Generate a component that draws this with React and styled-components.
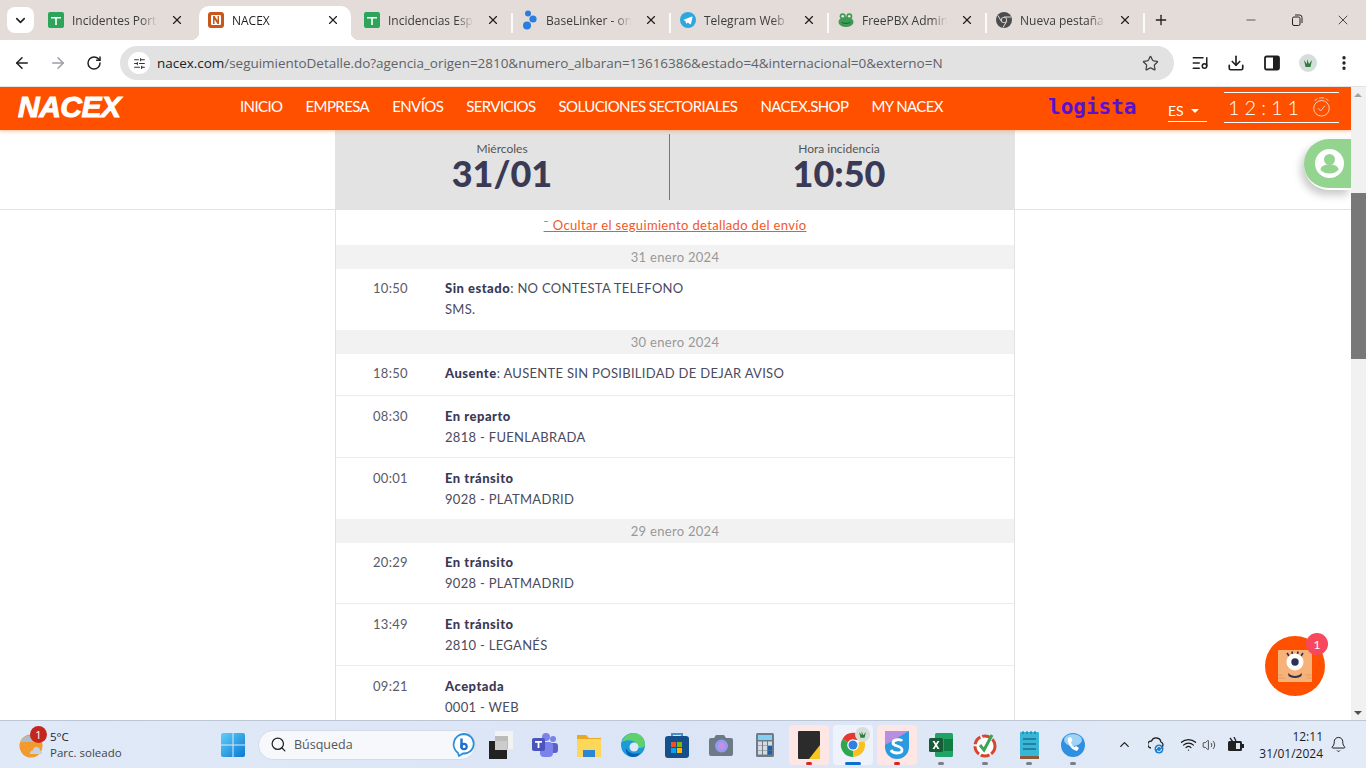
import styled, { createGlobalStyle } from 'styled-components';
import {
  ArrowLeft, ArrowRight, Bell, ChevronDown, ChevronUp, Download, EllipsisVertical, ListMusic,
  Minus, Plus, RotateCw, Search, SlidersHorizontal, Star, Volume2, Wifi, X,
} from 'lucide-react';

const GlobalStyle = createGlobalStyle`
  html, body { margin: 0; height: 100%; overflow: hidden; background: #fff; }
  * { box-sizing: border-box; }
`;

/* ---------- favicons and logos ---------- */

const SheetsIcon = () => (
  <svg width="16" height="16" viewBox="0 0 16 16">
    <rect width="16" height="16" rx="2" fill="#2ca55b" />
    <path d="M3 5h10v1.6H8.8V13H7.2V6.6H3z" fill="#fff" />
  </svg>
);
const NacexIcon = () => (
  <svg width="16" height="16" viewBox="0 0 16 16">
    <rect width="16" height="16" rx="3" fill="#c9561a" />
    <rect x="3" y="3" width="10" height="10" rx="1" fill="#fff" />
    <path d="M5 12V4h1.6L9.6 8.6V4H11v8H9.5L6.5 7.4V12z" fill="#c9561a" />
  </svg>
);
const BaseLinkerIcon = () => (
  <svg width="16" height="20" viewBox="0 0 16 20">
    <circle cx="6" cy="3.5" r="3" fill="#2b7de0" />
    <circle cx="11" cy="9" r="3.6" fill="#2b7de0" />
    <circle cx="5" cy="15.5" r="4" fill="#2b7de0" />
  </svg>
);
const TelegramIcon = () => (
  <svg width="16" height="16" viewBox="0 0 16 16">
    <circle cx="8" cy="8" r="8" fill="#2ea6e0" />
    <path d="M3.2 7.9l8.6-3.4c.5-.2.8.1.7.7L11 11.8c-.1.5-.5.6-.9.4L7.8 10.5 6.7 11.6c-.2.2-.4.2-.5-.1L5.4 9z" fill="#fff" />
  </svg>
);
const FrogIcon = () => (
  <svg width="17" height="16" viewBox="0 0 17 16">
    <ellipse cx="8.5" cy="10" rx="8" ry="5.5" fill="#3f9a55" />
    <circle cx="5" cy="4" r="3.2" fill="#3f9a55" />
    <circle cx="12" cy="4" r="3.2" fill="#3f9a55" />
    <circle cx="5" cy="4" r="1.4" fill="#d9f0d6" />
    <circle cx="12" cy="4" r="1.4" fill="#d9f0d6" />
    <path d="M4 10.5c2.5 1.5 6.500 1.5 9 0" stroke="#1e5a33" fill="none" />
  </svg>
);
const ChromeDark = () => (
  <svg width="16" height="16" viewBox="0 0 16 16">
    <circle cx="8" cy="8" r="8" fill="#4c4c4f" />
    <path d="M8 5h7M5.4 9.5L2 3.5M10.6 9.5L7 15.5" stroke="#e3dcd9" strokeWidth="1" />
    <circle cx="8" cy="8" r="3" fill="#e3dcd9" />
    <circle cx="8" cy="8" r="2.2" fill="#4c4c4f" />
  </svg>
);
const ChromeColor = () => (
  <svg width="26" height="26" viewBox="0 0 26 26">
    <path d="M13 13L2.5 7A12 12 0 0 1 24 8H13z" fill="#e5392f" />
    <path d="M13 13L24 8a12 12 0 0 1-11 17z" fill="#f7c120" />
    <path d="M13 13v12A12 12 0 0 1 2.5 7z" fill="#2fa64f" />
    <circle cx="13" cy="13" r="5.8" fill="#fff" />
    <circle cx="13" cy="13" r="4.5" fill="#2f7fe6" />
  </svg>
);
const PlantAvatar = ({ size = 18 }) => (
  <svg width={size} height={size} viewBox="0 0 18 18">
    <circle cx="9" cy="9" r="9" fill="#d5dedb" />
    <path d="M5 6l3 4 0-5 2 5 3-4-1.5 7h-5z" fill="#2f7d3a" />
  </svg>
);
const ProfileGlyph = () => (
  <svg width="29" height="29" viewBox="0 0 29 29">
    <circle cx="14.5" cy="14.5" r="14.5" fill="#fff" />
    <circle cx="14.5" cy="10.5" r="5.5" fill="#93d58f" />
    <path d="M5.5 21c0-4 4-5.500 9-5.500s9 1.500 9 5.500c-2.500 2.500-5.500 3.500-9 3.500s-6.500-1-9-3.500z" fill="#93d58f" />
  </svg>
);
const ChatBox = () => (
  <svg width="34" height="32" viewBox="0 0 34 32">
    <rect width="34" height="32" rx="1" fill="#f7b27a" />
    <path d="M0 25h5M0 28h7M27 25h7M29 28h5" stroke="#e89a5f" />
    <path d="M9 3l2 3M14 1.5l.5 3M20 1.5l-.5 3M25 3l-2 3" stroke="#2c3350" strokeWidth="1.6" />
    <circle cx="17" cy="12" r="8.5" fill="#fff" />
    <circle cx="17" cy="12" r="3.7" fill="#2c3350" />
    <path d="M10 23c4 4 10 4 14 0l-.5 3c-3 2.500-10 2.500-13 0z" fill="#2c3350" />
  </svg>
);
const ClockGlyph = () => (
  <svg width="19" height="22" viewBox="0 0 22 24" fill="none" stroke="#fbd7c4" strokeWidth="1.1">
    <circle cx="11" cy="13.5" r="9" />
    <path d="M7 13.5l3 3 5-6M3 5l3-3M19 5l-3-3M8 1.5h6" />
  </svg>
);

/* ---------- taskbar icons ---------- */

const WeatherIcon = () => (
  <svg width="26" height="28" viewBox="0 0 26 28">
    <circle cx="12" cy="15" r="11.5" fill="#f29a2e" />
    <path d="M2 11a3.500 3.500 0 0 1 3-4 4.500 4.500 0 0 1 8 1 3 3 0 0 1 1 3z" fill="#a9bdd3" />
    <path d="M11 23a3 3 0 0 1 3-3.500 3.500 3.500 0 0 1 7 0 2.500 2.500 0 0 1 2 3.500z" fill="#c4d4e6" />
  </svg>
);
const WinLogo = () => (
  <svg width="24" height="24" viewBox="0 0 24 24">
    <defs>
      <linearGradient id="win" x1="0" y1="0" x2="1" y2="1">
        <stop offset="0" stopColor="#5fd0f7" />
        <stop offset="1" stopColor="#0a78d4" />
      </linearGradient>
    </defs>
    <path d="M0 2a2 2 0 0 1 2-2h9.500v11.500H0zM12.500 0H22a2 2 0 0 1 2 2v9.500H12.500zM0 12.500h11.500V24H2a2 2 0 0 1-2-2zM12.500 12.500H24V22a2 2 0 0 1-2 2h-9.500z" fill="url(#win)" />
  </svg>
);
const BingBadge = () => (
  <svg width="26" height="26" viewBox="0 0 26 26" fill="none">
    <path d="M13 2a10.500 10.500 0 0 0-6 19l1 3 4-2.500h1A9.500 9.500 0 0 0 13 2z" fill="#fff" stroke="#2a8fdc" strokeWidth="1.8" />
    <path d="M10.500 6.500v9.500" stroke="#1d6fd0" strokeWidth="2.4" />
    <circle cx="13" cy="14.500" r="2.700" stroke="#1d6fd0" strokeWidth="2.200" />
  </svg>
);
const WidgetIcon = () => (
  <svg width="24" height="28" viewBox="0 0 24 28">
    <rect x="6" width="18" height="18" fill="#f2f2f2" />
    <rect x="6" y="5" width="13" height="13" fill="#bbb" />
    <rect y="10" width="18" height="18" fill="#222" />
    <rect x="6" y="10" width="12" height="9" fill="#ccc" />
  </svg>
);
const TeamsIcon = () => (
  <svg width="26" height="24" viewBox="0 0 26 24">
    <circle cx="21" cy="6" r="3" fill="#7b83eb" />
    <circle cx="14" cy="4" r="4" fill="#7b83eb" />
    <rect x="17" y="10" width="9" height="10" rx="3" fill="#5b5fc7" />
    <rect x="8" y="9" width="13" height="15" rx="4" fill="#7b83eb" />
    <rect y="5" width="13" height="13" rx="2" fill="#4b53bc" />
    <path d="M3 8h7v1.800H7.400V15H5.600V9.800H3z" fill="#fff" />
  </svg>
);
const FolderIcon = () => (
  <svg width="24" height="24" viewBox="0 0 24 24">
    <path d="M0 2h9l3 3h12v18H0z" fill="#e7a922" />
    <rect y="6" width="24" height="18" fill="#fcd75a" />
    <rect x="6" y="17" width="12" height="7" fill="#2a87d6" />
  </svg>
);
const EdgeIcon = () => (
  <svg width="24" height="24" viewBox="0 0 24 24">
    <circle cx="12" cy="12" r="12" fill="#1c9bd8" />
    <path d="M1 9C3 2 9 0 13 0c6 0 11 5 11 11 0 3-3 4-6 4-4 0-2-3-3-5-2-3-9-4-14-1z" fill="#5fd06e" />
    <circle cx="13" cy="14" r="4.500" fill="#dfe8f6" />
    <path d="M12 24c-4 0-8-4-7-9 2 5 8 7 14 5-2 3-4 4-7 4z" fill="#0a5fb4" />
  </svg>
);
const StoreIcon = () => (
  <svg width="24" height="26" viewBox="0 0 24 26">
    <path d="M7 5V2h10v3" fill="none" stroke="#4a8fc9" strokeWidth="2" />
    <rect y="4" width="24" height="22" rx="3" fill="#15508a" />
    <rect x="6" y="10" width="5" height="5" fill="#f25022" />
    <rect x="12" y="10" width="5" height="5" fill="#7fba00" />
    <rect x="6" y="16" width="5" height="5" fill="#00a4ef" />
    <rect x="12" y="16" width="5" height="5" fill="#ffb900" />
  </svg>
);
const CameraIcon = () => (
  <svg width="24" height="22" viewBox="0 0 24 22">
    <path d="M7 1h8l2 3h5a2 2 0 0 1 2 2v14a2 2 0 0 1-2 2H2a2 2 0 0 1-2-2V6a2 2 0 0 1 2-2h3z" fill="#6d7a86" />
    <circle cx="12.500" cy="12" r="6.500" fill="#8f9df0" />
    <circle cx="12.500" cy="12" r="3.500" fill="#c88ee8" />
  </svg>
);
const CalcIcon = () => (
  <svg width="18" height="24" viewBox="0 0 18 24">
    <rect width="18" height="24" rx="1.500" fill="#6f7c87" />
    <rect x="2" y="2" width="14" height="5" fill="#7fd0f2" />
    {[8.5, 13, 17.5].map((y) => [2, 7, 12].map((x) => (
      <rect key={`${x}-${y}`} x={x} y={y} width="4" height="4" fill={x === 12 && y > 10 ? '#1c5fa8' : '#d5dbe0'} />
    )))}
  </svg>
);
const StickyIcon = () => (
  <svg width="22" height="28" viewBox="0 0 22 28">
    <rect width="22" height="28" rx="1" fill="#2b2b2b" />
    <path d="M22 14v14H11z" fill="#f7c720" />
  </svg>
);
const SkypeIcon = () => (
  <svg width="24" height="28" viewBox="0 0 24 28">
    <path d="M0 0h24v16a12 12 0 0 1-24 0z" fill="#2a9be0" />
    <path d="M0 0h24L0 14z" fill="#b78fe0" />
    <path d="M17 10c-1-2-9-2-9 2s9 2 9 7c0 4-9 4-11 0" fill="none" stroke="#fff" strokeWidth="2.800" />
  </svg>
);
const ExcelIcon = () => (
  <svg width="24" height="24" viewBox="0 0 24 24">
    <rect x="6" width="18" height="24" rx="1.500" fill="#21a366" />
    <rect x="15" y="6" width="9" height="12" fill="#107c41" />
    <rect y="5" width="14" height="14" rx="1.500" fill="#185c37" />
    <path d="M3.500 8h2l1.500 2.500L8.500 8h2L8 12l2.500 4h-2L7 13.500 5.500 16h-2L6 12z" fill="#fff" />
  </svg>
);
const TaskCheckIcon = () => (
  <svg width="24" height="26" viewBox="0 0 24 26">
    <circle cx="12" cy="14" r="10" fill="#fff" stroke="#d8442e" strokeWidth="3" strokeDasharray="9 2" />
    <path d="M7 13l4 5 8-15" fill="none" stroke="#3aa655" strokeWidth="3" />
  </svg>
);
const NotepadIcon = () => (
  <svg width="19" height="28" viewBox="0 0 19 28">
    <rect y="1" width="19" height="24" rx="1" fill="#38b6d8" />
    <path d="M3 8h13M3 13h13M3 18h13" stroke="#1b6f8e" strokeWidth="1.600" />
    <path d="M3 0v3M7 0v3M11 0v3M15 0v3" stroke="#1b6f8e" />
    <rect y="25" width="19" height="3" fill="#8a5a3a" />
  </svg>
);
const PhoneIcon = () => (
  <svg width="24" height="26" viewBox="0 0 24 26">
    <circle cx="12" cy="13" r="12" fill="#2f8fe0" />
    <ellipse cx="12" cy="8" rx="9" ry="6" fill="#9fd3f5" />
    <path d="M7 6c-1 5 3 12 9 13l2-3-3-2-1.500 1c-2-1-3-3-3.500-5l1.500-1-1.500-4z" fill="#fff" />
  </svg>
);
const CloudSync = () => (
  <svg width="18" height="18" viewBox="0 0 18 18">
    <path d="M3 12a3.500 3.500 0 0 1 .5-7 5 5 0 0 1 9.500 1 3 3 0 0 1 1 5" fill="none" stroke="#222" strokeWidth="1.300" />
    <circle cx="11" cy="13" r="4.500" fill="#1d7fd0" />
    <path d="M8.500 13a2.500 2.500 0 0 1 4.500-1.500M13.500 13a2.500 2.500 0 0 1-4.500 1.500" stroke="#fff" fill="none" />
  </svg>
);
const BatteryPlug = () => (
  <svg width="18" height="16" viewBox="0 0 18 16">
    <rect x="1" y="4" width="14" height="10" rx="1.500" fill="#222" />
    <rect x="15" y="7" width="2" height="4" fill="#222" />
    <path d="M3 1l3 4M7 0l2 4" stroke="#222" strokeWidth="1.300" />
    <rect x="9" y="6" width="4" height="6" fill="#dfe8f6" />
  </svg>
);
const PanelIcon = () => (
  <svg width="16" height="16" viewBox="0 0 16 16">
    <rect x="1" y="1.5" width="14" height="13" rx="1.500" fill="none" stroke="#1f1f1f" strokeWidth="1.800" />
    <rect x="9" y="1.5" width="6" height="13" fill="#1f1f1f" />
  </svg>
);
const RestoreIcon = () => (
  <svg width="12" height="12" viewBox="0 0 12 12" fill="none" stroke="#222">
    <rect x="1.5" y="3" width="7.500" height="8.500" rx="1.500" />
    <path d="M4 1h4.500A2.500 2.500 0 0 1 11 3.500V9" />
  </svg>
);

/* ---------- data ---------- */

const tabs = [
  { title: 'Incidentes Portugal', icon: <SheetsIcon /> },
  { title: 'NACEX', icon: <NacexIcon />, active: true },
  { title: 'Incidencias España', icon: <SheetsIcon /> },
  { title: 'BaseLinker - online', icon: <BaseLinkerIcon />, sep: true },
  { title: 'Telegram Web', icon: <TelegramIcon />, sep: true },
  { title: 'FreePBX Administration', icon: <FrogIcon />, sep: true },
  { title: 'Nueva pestaña', icon: <ChromeDark />, sep: true },
];

const navItems = ['INICIO', 'EMPRESA', 'ENVÍOS', 'SERVICIOS', 'SOLUCIONES SECTORIALES', 'NACEX.SHOP', 'MY NACEX'];

const tracking = [
  { date: '31 enero 2024', rows: [{ time: '10:50', state: 'Sin estado', note: ': NO CONTESTA TELEFONO', detail: 'SMS.' }] },
  {
    date: '30 enero 2024',
    rows: [
      { time: '18:50', state: 'Ausente', note: ': AUSENTE SIN POSIBILIDAD DE DEJAR AVISO' },
      { time: '08:30', state: 'En reparto', detail: '2818 - FUENLABRADA' },
      { time: '00:01', state: 'En tránsito', detail: '9028 - PLATMADRID' },
    ],
  },
  {
    date: '29 enero 2024',
    rows: [
      { time: '20:29', state: 'En tránsito', detail: '9028 - PLATMADRID' },
      { time: '13:49', state: 'En tránsito', detail: '2810 - LEGANÉS' },
      { time: '09:21', state: 'Aceptada', detail: '0001 - WEB' },
    ],
  },
];

const taskApps = [
  { icon: <WidgetIcon /> },
  { icon: <TeamsIcon /> },
  { icon: <FolderIcon /> },
  { icon: <EdgeIcon /> },
  { icon: <StoreIcon /> },
  { icon: <CameraIcon /> },
  { icon: <CalcIcon /> },
  { icon: <StickyIcon />, tone: 'alert', dot: 'red' },
  { icon: <ChromeColor />, tone: 'open', dot: 'blue', badge: true },
  { icon: <SkypeIcon />, tone: 'alert', dot: 'red' },
  { icon: <ExcelIcon />, dot: 'grey' },
  { icon: <TaskCheckIcon />, dot: 'grey' },
  { icon: <NotepadIcon />, dot: 'grey' },
  { icon: <PhoneIcon />, dot: 'grey' },
];

/* ---------- styled parts ---------- */

const Screen = styled.div`
  width: 1366px;
  height: 768px;
  display: flex;
  flex-direction: column;
  overflow: hidden;
  font-family: 'Open Sans', 'Liberation Sans', sans-serif;
`;

const TabStrip = styled.div`
  height: 40px;
  flex: none;
  display: flex;
  align-items: flex-end;
  background: #e3dcd9;
`;

const TabSearch = styled.div`
  width: 27px;
  height: 26px;
  margin: 0 3px 7px 7px;
  border-radius: 8px;
  background: #fff;
  display: flex;
  align-items: center;
  justify-content: center;
  color: #1f1f1f;
`;

const Tab = styled.div`
  position: relative;
  flex: none;
  width: 158px;
  height: 34px;
  display: flex;
  align-items: center;
  padding: 0 10px 6px 11px;
  font-size: 12px;
  color: #3c3c3c;

  ${(p) => p.$sep && `
    &::before {
      content: '';
      position: absolute;
      left: 0;
      top: 7px;
      height: 20px;
      width: 1.5px;
      background: #fafafa;
    }
  `}
`;

/* selected tab sits slightly inset and flares into the toolbar at its feet */
const ActiveTab = styled(Tab)`
  width: 152px;
  margin: 0 2px 0 4px;
  padding-left: 9px;
  background: #fff;
  border-radius: 10px 10px 0 0;
  color: #1f1f1f;

  &::before, &::after {
    content: '';
    position: absolute;
    bottom: 0;
    width: 8px;
    height: 8px;
  }
  &::before { left: -8px; background: radial-gradient(circle at 0 0, transparent 8px, #fff 8.5px); }
  &::after { right: -8px; background: radial-gradient(circle at 100% 0, transparent 8px, #fff 8.5px); }
`;

const TabIcon = styled.span`
  width: 16px;
  height: 20px;
  flex: none;
  display: flex;
  align-items: center;
  justify-content: center;
`;

const TabTitle = styled.span`
  width: 88px;
  margin-left: 8px;
  white-space: nowrap;
  overflow: hidden;
  -webkit-mask-image: linear-gradient(90deg, #000 78%, transparent 97%);
  mask-image: linear-gradient(90deg, #000 78%, transparent 97%);
`;

const TabClose = styled.span`
  width: 16px;
  margin-left: 9px;
  display: flex;
  justify-content: center;
  color: #1f1f1f;
`;

const NewTab = styled.div`
  position: relative;
  width: 36px;
  height: 34px;
  padding-bottom: 6px;
  margin-right: 49px;
  display: flex;
  align-items: center;
  justify-content: center;
  color: #1f1f1f;

  &::before {
    content: '';
    position: absolute;
    left: 0;
    top: 7px;
    height: 20px;
    width: 1.5px;
    background: #fafafa;
  }
`;

const WindowButton = styled.div`
  width: 46px;
  height: 40px;
  display: flex;
  align-items: center;
  justify-content: center;
  color: #222;
`;

const Toolbar = styled.div`
  height: 47px;
  flex: none;
  display: flex;
  align-items: center;
  padding: 0 4px;
  background: #fff;
  border-bottom: 1px solid #e3e3e3;
`;

const ToolButton = styled.div`
  width: 36px;
  height: 36px;
  flex: none;
  display: flex;
  align-items: center;
  justify-content: center;
  color: ${(p) => (p.$muted ? '#9aa0a6' : '#1f1f1f')};
`;

const Omnibox = styled.div`
  flex: 1;
  height: 34px;
  margin: 0 8px;
  border-radius: 17px;
  background: #e2e2e2;
  display: flex;
  align-items: center;
  padding: 0 15px 0 8px;
  color: #5f6368;
  font-size: 13.5px;
  letter-spacing: -0.03px;
`;

const SiteInfo = styled.div`
  width: 22px;
  height: 22px;
  margin-right: 7px;
  border-radius: 50%;
  background: #fff;
  display: flex;
  align-items: center;
  justify-content: center;
  color: #333;
`;

const Url = styled.span`
  flex: 1;
  white-space: nowrap;
  b { font-weight: 400; color: #202124; }
`;

const Viewport = styled.div`
  flex: 1;
  min-height: 0;
  display: flex;
`;

const Site = styled.div`
  position: relative;
  flex: 1;
  min-width: 0;
  display: flex;
  flex-direction: column;
  overflow: hidden;
  font-family: Lato, 'Liberation Sans', sans-serif;
`;

const Header = styled.header`
  position: relative;
  z-index: 2;
  height: 43px;
  flex: none;
  display: flex;
  align-items: center;
  background: #ff5000;
  box-shadow: 0 1px 4px rgba(255, 120, 40, 0.5);
  color: #fff;
  padding-left: 18px;
  white-space: nowrap;
`;

const Brand = styled.div`
  flex: none;
  width: 222px;
  margin-bottom: 3px;
  font-family: 'Liberation Sans', sans-serif;
  font-size: 30px;
  font-weight: 700;
  font-style: italic;
  letter-spacing: -0.5px;
  -webkit-text-stroke: 1px #fff;
`;

const Nav = styled.nav`
  flex: none;
  width: 703px;
  display: flex;
  justify-content: space-between;
  margin-bottom: 5px;
  font-size: 15px;
  letter-spacing: -0.6px;
`;

const Logista = styled.div`
  flex: none;
  margin-left: 105px;
  width: 120px;
  margin-bottom: 3px;
  color: #5511d6;
  font-family: 'DejaVu Sans Mono', monospace;
  font-size: 21px;
  font-weight: 700;
`;

const Lang = styled.div`
  flex: none;
  align-self: flex-end;
  width: 39px;
  height: 26px;
  padding-top: 4px;
  margin-bottom: 8px;
  display: flex;
  align-items: center;
  gap: 7px;
  border-bottom: 1px solid #fff;
  font-size: 14px;
  &::after {
    content: '';
    border: 4px solid transparent;
    border-top-color: #fff;
    border-bottom: 0;
  }
`;

const Clock = styled.div`
  flex: none;
  width: 115px;
  height: 31px;
  margin: 0 0 3px 17px;
  display: flex;
  align-items: center;
  gap: 8px;
  padding-left: 4px;
  border-top: 1px solid #fff;
  border-bottom: 1px solid #fff;
  color: #fff;
  font-size: 20px;
  font-weight: 300;
  letter-spacing: 5px;
`;

const Content = styled.main`
  flex: 1;
  min-height: 0;
  display: flex;
  flex-direction: column;
  color: #3a3a55;
`;

const HeroBand = styled.section`
  flex: none;
  height: 80px;
  padding-left: 335px;
  border-bottom: 1px solid #e2e2e2;
`;

const Hero = styled.div`
  width: 680px;
  height: 100%;
  display: grid;
  grid-template-columns: 334px 1fr;
  padding: 4px 0 9px;
  background: #e3e3e3;
`;

const HeroCell = styled.div`
  display: flex;
  flex-direction: column;
  align-items: center;
  padding-top: 7px;
  ${(p) => p.$divided && 'border-left: 1px solid #777; padding-right: 7px;'}
`;

const HeroLabel = styled.span`
  font-size: 12px;
  line-height: 15px;
  color: #555;
`;

const HeroValue = styled.span`
  font-size: 36px;
  line-height: 34px;
  font-weight: 900;
  color: #3a3a55;
`;

const Column = styled.div`
  width: 680px;
  margin-left: 335px;
  flex: 1;
  min-height: 0;
  border-left: 1px solid #e2e2e2;
  border-right: 1px solid #e2e2e2;
  font-size: 13px;
  letter-spacing: 0.3px;
`;

const ToggleRow = styled.div`
  height: 35px;
  padding-bottom: 6px;
  display: flex;
  align-items: center;
  justify-content: center;
`;

const ToggleLink = styled.a`
  color: #f0582a;
  text-decoration: underline;
  font-size: 13px;
  letter-spacing: 0.34px;
`;

const DateBar = styled.h3`
  height: 24px;
  margin: 0;
  display: flex;
  align-items: center;
  justify-content: center;
  background: #f2f2f2;
  color: #989898;
  font-size: 13px;
  font-weight: 400;
`;

const Row = styled.div`
  display: grid;
  grid-template-columns: 72px 1fr;
  height: ${(p) => (p.$single ? 42 : 62)}px;
  padding: 10px 0 0 37px;
  line-height: 21px;
  color: #4a4a60;
  &:not(:last-child) { border-bottom: 1px solid #ececec; }
  &:first-of-type {
    padding-top: 9px;
    ${(p) => !p.$single && 'height: 61px;'}
  }
  &:last-child { height: 61px; }
`;

const Time = styled.span`
  color: #5a5a6a;
`;

const State = styled.b`
  font-weight: 900;
  letter-spacing: 0.5px;
  color: #3a3a55;
`;

const Scrollbar = styled.div`
  position: relative;
  width: 15px;
  flex: none;
  background: #f1f1f1;
`;

const ScrollThumb = styled.div`
  position: absolute;
  top: 106px;
  left: 0;
  right: 0;
  height: 166px;
  background: #787878;
`;

const ScrollArrow = styled.div`
  position: absolute;
  left: 3px;
  ${(p) => (p.$down ? 'bottom: 5px;' : 'top: 6px;')}
  border: 4.5px solid transparent;
  ${(p) => (p.$down ? 'border-top-color: #505050; border-bottom: 0;' : 'border-bottom-color: #a3a3a3; border-top: 0;')}
`;

const ProfileTab = styled.div`
  position: absolute;
  right: 0;
  top: 52px;
  width: 47px;
  height: 51px;
  border-radius: 25px 0 0 25px;
  background: #93d58f;
  border-bottom: 2px solid #fff;
  box-shadow: -3px 5px 8px rgba(0, 0, 0, 0.22);
  display: flex;
  align-items: center;
  justify-content: center;
  padding-left: 3px;
`;

const ChatButton = styled.div`
  position: absolute;
  right: 26px;
  bottom: 24px;
  width: 60px;
  height: 60px;
  border-radius: 50%;
  background: #ff5000;
  display: flex;
  align-items: center;
  justify-content: center;
`;

const ChatBadge = styled.span`
  position: absolute;
  top: -3px;
  right: -3px;
  width: 22px;
  height: 22px;
  border-radius: 50%;
  background: #f8485e;
  color: #fff;
  font-size: 12px;
  display: flex;
  align-items: center;
  justify-content: center;
`;

const Taskbar = styled.footer`
  height: 48px;
  flex: none;
  display: flex;
  align-items: center;
  background: linear-gradient(90deg, #dfe9f7 0%, #dbe5f6 50%, #e3ebf7 100%);
  border-top: 1px solid #bcc6d4;
  color: #1d1d1d;
`;

const Weather = styled.div`
  position: relative;
  width: 211px;
  display: flex;
  align-items: center;
  gap: 5px;
  padding-left: 19px;
`;

const WeatherBadge = styled.span`
  position: absolute;
  left: 30px;
  top: -3px;
  width: 17px;
  height: 17px;
  border-radius: 50%;
  background: #c4261d;
  color: #fff;
  font-size: 11px;
  display: flex;
  align-items: center;
  justify-content: center;
`;

const WeatherText = styled.div`
  font-size: 11.5px;
  line-height: 16px;
  span { display: block; color: #444; }
`;

const StartSlot = styled.div`
  width: 44px;
  display: flex;
  justify-content: center;
`;

const SearchBox = styled.div`
  width: 218px;
  height: 30px;
  margin: 0 3px;
  padding: 0 0 0 11px;
  border-radius: 15px;
  background: #f6f8fc;
  border: 1px solid #d3dceb;
  display: flex;
  align-items: center;
  gap: 7px;
  font-size: 12.5px;
  color: #555;
  span { flex: 1; }
  svg:last-child { margin-right: -2px; }
`;

const AppSlot = styled.div`
  position: relative;
  width: 44px;
  height: 40px;
  display: flex;
  align-items: center;
  justify-content: center;
  &::before {
    content: '';
    position: absolute;
    inset: 0 2px;
    border-radius: 4px;
    background: ${(p) => (p.$tone === 'alert' ? '#fde6e4' : p.$tone === 'open' ? '#edf2fb' : 'transparent')};
  }
  svg { position: relative; }
`;

const AppDot = styled.span`
  position: absolute;
  bottom: 0;
  left: 50%;
  transform: translateX(-50%);
  height: 3px;
  border-radius: 2px;
  width: ${(p) => (p.$kind === 'blue' ? 16 : 6)}px;
  background: ${(p) => ({ red: '#d9251d', blue: '#0a6fd0', grey: '#7a7f87' }[p.$kind])};
`;

const AppBadge = styled.span`
  position: absolute;
  top: 2px;
  right: 5px;
  line-height: 0;
`;

const TrayItem = styled.div`
  width: ${(p) => p.$w}px;
  flex: none;
  display: flex;
  justify-content: center;
  color: #1d1d1d;
`;

const TrayStart = styled(TrayItem)`
  margin-left: 13px;
`;

const DateTime = styled.div`
  width: 67px;
  text-align: right;
  font-size: 12px;
  line-height: 17px;
  white-space: nowrap;
`;

const App = () => (
  <Screen>
    <GlobalStyle />
    <TabStrip>
      <TabSearch><ChevronDown size={15} strokeWidth={2.5} /></TabSearch>
      {tabs.map((tab) => {
        const TabShell = tab.active ? ActiveTab : Tab;
        return (
          <TabShell key={tab.title} $sep={tab.sep}>
            <TabIcon>{tab.icon}</TabIcon>
            <TabTitle>{tab.title}</TabTitle>
            <TabClose><X size={14} strokeWidth={2} /></TabClose>
          </TabShell>
        );
      })}
      <NewTab><Plus size={16} strokeWidth={2} /></NewTab>
      <WindowButton><Minus size={14} strokeWidth={1.2} /></WindowButton>
      <WindowButton><RestoreIcon /></WindowButton>
      <WindowButton><X size={16} strokeWidth={1.2} /></WindowButton>
    </TabStrip>

    <Toolbar>
      <ToolButton><ArrowLeft size={18} strokeWidth={2} /></ToolButton>
      <ToolButton $muted><ArrowRight size={18} strokeWidth={2} /></ToolButton>
      <ToolButton><RotateCw size={16} strokeWidth={2.2} /></ToolButton>
      <Omnibox>
        <SiteInfo><SlidersHorizontal size={13} strokeWidth={2} /></SiteInfo>
        <Url><b>nacex.com</b>/seguimientoDetalle.do?agencia_origen=2810&numero_albaran=13616386&estado=4&internacional=0&externo=N</Url>
        <Star size={17} strokeWidth={1.8} color="#444" />
      </Omnibox>
      <ToolButton><ListMusic size={18} strokeWidth={2} /></ToolButton>
      <ToolButton><Download size={18} strokeWidth={2.2} /></ToolButton>
      <ToolButton><PanelIcon /></ToolButton>
      <ToolButton><PlantAvatar /></ToolButton>
      <ToolButton><EllipsisVertical size={18} strokeWidth={2.5} /></ToolButton>
    </Toolbar>

    <Viewport>
      <Site>
        <Header>
          <Brand>NACEX</Brand>
          <Nav>
            {navItems.map((item) => <span key={item}>{item}</span>)}
          </Nav>
          <Logista>logista</Logista>
          <Lang>ES</Lang>
          <Clock>12:11<ClockGlyph /></Clock>
        </Header>
        <Content>
          <HeroBand>
            <Hero>
              <HeroCell>
                <HeroLabel>Miércoles</HeroLabel>
                <HeroValue>31/01</HeroValue>
              </HeroCell>
              <HeroCell $divided>
                <HeroLabel>Hora incidencia</HeroLabel>
                <HeroValue>10:50</HeroValue>
              </HeroCell>
            </Hero>
          </HeroBand>
          <Column>
            <ToggleRow>
              <ToggleLink>¯ Ocultar el seguimiento detallado del envío</ToggleLink>
            </ToggleRow>
            {tracking.map((day) => (
              <section key={day.date}>
                <DateBar>{day.date}</DateBar>
                {day.rows.map((row) => (
                  <Row key={row.time} $single={!row.detail}>
                    <Time>{row.time}</Time>
                    <div>
                      <State>{row.state}</State>{row.note}
                      {row.detail && <div>{row.detail}</div>}
                    </div>
                  </Row>
                ))}
              </section>
            ))}
          </Column>
        </Content>
        <ProfileTab><ProfileGlyph /></ProfileTab>
        <ChatButton>
          <ChatBox />
          <ChatBadge>1</ChatBadge>
        </ChatButton>
      </Site>
      <Scrollbar>
        <ScrollArrow />
        <ScrollThumb />
        <ScrollArrow $down />
      </Scrollbar>
    </Viewport>

    <Taskbar>
      <Weather>
        <WeatherIcon />
        <WeatherBadge>1</WeatherBadge>
        <WeatherText>5°C<span>Parc. soleado</span></WeatherText>
      </Weather>
      <StartSlot><WinLogo /></StartSlot>
      <SearchBox>
        <Search size={17} strokeWidth={1.8} color="#222" />
        <span>Búsqueda</span>
        <BingBadge />
      </SearchBox>
      {taskApps.map((app, i) => (
        <AppSlot key={i} $tone={app.tone}>
          {app.icon}
          {app.badge && <AppBadge><PlantAvatar size={15} /></AppBadge>}
          {app.dot && <AppDot $kind={app.dot} />}
        </AppSlot>
      ))}
      <TrayStart $w={32}><ChevronUp size={15} strokeWidth={2} /></TrayStart>
      <TrayItem $w={34}><CloudSync /></TrayItem>
      <TrayItem $w={28}><Wifi size={17} strokeWidth={1.7} /></TrayItem>
      <TrayItem $w={14}><Volume2 size={18} strokeWidth={1.3} /></TrayItem>
      <TrayItem $w={40}><BatteryPlug /></TrayItem>
      <DateTime>12:11<br />31/01/2024</DateTime>
      <TrayItem $w={30}><Bell size={17} strokeWidth={1.4} /></TrayItem>
    </Taskbar>
  </Screen>
);

export default App;
